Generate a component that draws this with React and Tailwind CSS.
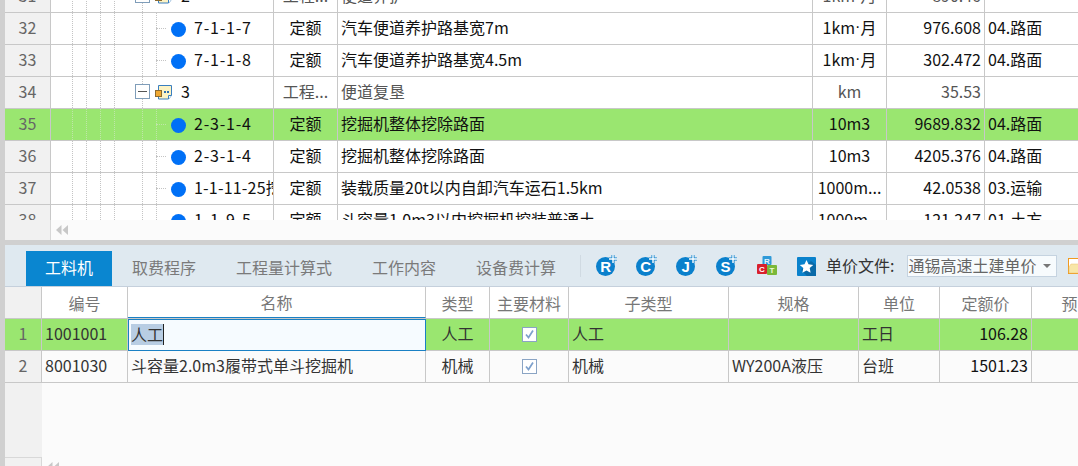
import React from "react";

const font = "font-['Noto_Sans_CJK_SC','Noto_Sans',sans-serif]";
const topCols = "grid grid-cols-[46px_223px_64px_475px_74px_98px_93px]";
const bottomCols = "grid grid-cols-[37px_86px_298px_64px_79px_160px_130px_81px_92px_76px]";
const cell = "border-r border-[#c8c8c8] flex items-center overflow-hidden whitespace-nowrap";
const textCell = `${cell} pb-[3px]`;

const topRows = [
  { no: 31, group: true, code: "2", type: "工程...", name: "便道养护", unit: "1km·月", qty: "890.46", cat: "", dim: true },
  { no: 32, code: "7-1-1-7", type: "定额", name: "汽车便道养护路基宽7m", unit: "1km·月", qty: "976.608", cat: "04.路面" },
  { no: 33, code: "7-1-1-8", type: "定额", name: "汽车便道养护路基宽4.5m", unit: "1km·月", qty: "302.472", cat: "04.路面" },
  { no: 34, group: true, code: "3", type: "工程...", name: "便道复垦", unit: "km", qty: "35.53", cat: "", dim: true },
  { no: 35, code: "2-3-1-4", type: "定额", name: "挖掘机整体挖除路面", unit: "10m3", qty: "9689.832", cat: "04.路面", active: true },
  { no: 36, code: "2-3-1-4", type: "定额", name: "挖掘机整体挖除路面", unit: "10m3", qty: "4205.376", cat: "04.路面" },
  { no: 37, code: "1-1-11-25挖", tight: true, type: "定额", name: "装载质量20t以内自卸汽车运石1.5km", unit: "1000m...", qty: "42.0538", cat: "03.运输" },
  { no: 38, code: "1-1-9-5", type: "定额", name: "斗容量1.0m3以内挖掘机挖装普通土", unit: "1000m...", qty: "121.247", cat: "01.土方" },
];

// the middle dot has to come from a latin font, the CJK one makes it full width
function Unit({ text }) {
  const parts = text.split("·");
  if (parts.length < 2) return text;
  return (
    <>
      {parts[0]}
      <span className="font-['Liberation_Sans',sans-serif]">·</span>
      {parts[1]}
    </>
  );
}

function Guide({ line = true, children, light }) {
  return (
    <div className="relative w-[14px] h-full flex justify-center shrink-0">
      {line && <div className={`h-full border-l border-dotted ${light ? "border-[#bfe6a8]" : "border-[#c4c4c4]"}`} />}
      {children}
    </div>
  );
}

function GroupIcon() {
  return (
    <svg width="17" height="15" viewBox="0 0 17 15" className="shrink-0">
      <path d="M3.5 0.5h13v10l-3 3.5h-10z" fill="#fdf3c4" stroke="#3a7fc0" />
      <path d="M13.5 14v-3.5h3" fill="#fff" stroke="#3a7fc0" />
      <rect x="0.5" y="5.5" width="6" height="6" fill="#f0a830" stroke="#8a6a30" />
      <rect x="9" y="6" width="2" height="2" fill="#2f6fb0" />
      <rect x="12" y="6" width="2" height="2" fill="#2f6fb0" />
    </svg>
  );
}

function TreeCell({ row }) {
  return (
    <div className={`${cell} text-[#111]`}>
      <div className="w-[14px] shrink-0" />
      <Guide light={row.active} />
      <Guide light={row.active} />
      <Guide light={row.active} />
      <Guide light={row.active} />
      <Guide line={false} />
      <Guide light={row.active}>
        {row.group && (
          <div className="absolute left-0 top-[7px] w-[15px] h-[15px] bg-white border border-[#7f9db9] flex items-center justify-center">
            <div className="w-[9px] h-px bg-[#555]" />
          </div>
        )}
      </Guide>
      {row.group ? (
        <div className="flex items-center ml-[6px]">
          <GroupIcon />
          <span className="ml-[9px] pb-[3px]">{row.code}</span>
        </div>
      ) : (
        <div className="flex items-center h-full">
          <Guide light={row.active}>
            <div className={`absolute left-[7px] top-[15px] w-[10px] border-t border-dotted ${row.active ? "border-[#bfe6a8]" : "border-[#c4c4c4]"}`} />
          </Guide>
          <div className="w-[15px] h-[15px] rounded-full bg-[#0070f6] ml-[8px] mt-px shrink-0" />
          <span className={`ml-[8px] pb-[3px] ${row.tight ? "tracking-[0.2px]" : "tracking-[0.8px]"}`}>{row.code}</span>
        </div>
      )}
    </div>
  );
}

function TopRow({ row }) {
  const color = row.dim ? "text-[#555]" : "text-[#111]";
  return (
    <div className={`${topCols} h-[32px] border-b border-[#c8c8c8] ${row.active ? "bg-[#9ae670]" : "bg-white"}`}>
      <div className={`${textCell} justify-center text-[#666] ${row.active ? "" : "bg-[#f1f1f1]"}`}>{row.no}</div>
      <TreeCell row={row} />
      <div className={`${textCell} justify-center ${color}`}>{row.type}</div>
      <div className={`${textCell} pl-[3px] ${color}`}>{row.name}</div>
      <div className={`${textCell} justify-center ${color}`}><Unit text={row.unit} /></div>
      <div className={`${textCell} justify-end pr-[3px] ${color}`}>{row.qty}</div>
      <div className="flex items-center pl-[3px] pb-[3px] text-[#111] whitespace-nowrap overflow-hidden">{row.cat}</div>
    </div>
  );
}

function Arrows() {
  return (
    <svg width="12" height="10" viewBox="0 0 12 10">
      <path d="M5.5 0v10L0 5z" fill="#c8c8c8" />
      <path d="M12 0v10L6.5 5z" fill="#c8c8c8" />
    </svg>
  );
}

function RoundIcon({ letter }) {
  return (
    <div className="relative w-[20px] h-[20px] shrink-0">
      <div className="absolute left-0 bottom-0 w-[19px] h-[19px] rounded-full bg-[#0a80cc] flex items-center justify-center text-white text-[15px] leading-none font-bold font-['Liberation_Sans',sans-serif]">
        {letter}
      </div>
      <svg width="10" height="10" viewBox="0 0 10 10" className="absolute right-[-2px] top-[-2px]">
        <path d="M5 1v8M1 5h8" stroke="#0a80cc" strokeWidth="3" />
        <path d="M5 1v8M1 5h8" stroke="#fff" strokeWidth="1.4" />
      </svg>
    </div>
  );
}

function CubesIcon() {
  return (
    <svg width="20" height="20" viewBox="0 0 20 20" className="shrink-0 font-['Liberation_Sans',sans-serif]">
      <rect x="5.5" y="0" width="9" height="9" rx="1" fill="#2f9ad8" />
      <rect x="0" y="8" width="10" height="10" rx="1" fill="#d8202c" />
      <rect x="10" y="9" width="10" height="10" rx="1" fill="#7ab83a" />
      <text x="10" y="7.5" textAnchor="middle" fontSize="8" fontWeight="700" fill="#e4f4fc">R</text>
      <text x="5" y="16" textAnchor="middle" fontSize="8" fontWeight="700" fill="#fff">C</text>
      <text x="15" y="17" textAnchor="middle" fontSize="8" fontWeight="700" fill="#eef8dc">T</text>
    </svg>
  );
}

function StarIcon() {
  return (
    <svg width="19" height="19" viewBox="0 0 19 19" className="shrink-0">
      <rect width="19" height="19" rx="1" fill="#0a82cc" />
      <path d="M19 19V8L14 4l-10 9 6 6z" fill="#0a6aa8" />
      <path d="M9.5 3l2 4.3 4.7.6-3.5 3.2.9 4.7-4.1-2.3-4.1 2.3.9-4.7-3.5-3.2 4.7-.6z" fill="#fff" />
    </svg>
  );
}

function FolderIcon() {
  return (
    <svg width="16" height="16" viewBox="0 0 16 16" className="shrink-0">
      <rect x="0.5" y="0.5" width="15" height="15" fill="#fff" stroke="#f09a20" />
      <path d="M1 15V9l2-3h12v9z" fill="#f8e6a8" stroke="#e8c070" strokeWidth="0.5" />
    </svg>
  );
}

function Checkbox() {
  return (
    <div className="w-[15px] h-[15px] bg-white border border-[#8aa4c4] flex items-center justify-center">
      <svg width="11" height="11" viewBox="0 0 11 11">
        <path d="M2 5.5l2.5 3L9 1.5" fill="none" stroke="#7da0cc" strokeWidth="1.7" />
      </svg>
    </div>
  );
}

const tabs = ["取费程序", "工程量计算式", "工作内容", "设备费计算"];
const headers = ["编号", "名称", "类型", "主要材料", "子类型", "规格", "单位", "定额价", "预"];
const headerCell = "border-r border-[#c8c8c8] flex items-center justify-center overflow-hidden whitespace-nowrap text-[#777] bg-white";

export default function App() {
  return (
    <div className={`${font} flex h-screen w-[1078px] overflow-hidden text-base bg-[#d0d0d0]`}>
      <div className="w-[5px] shrink-0 bg-[#d0d0d0]" />
      <div className="flex-1 flex flex-col min-w-0">
        <div className="h-[220px] overflow-hidden bg-white">
          <div className="-mt-[19px]">
            {topRows.map((row) => (
              <TopRow key={row.no} row={row} />
            ))}
          </div>
        </div>
        <div className="h-[20px] flex bg-[#fbfbfb]">
          <div className="w-[46px] bg-[#f1f1f1] border-r border-[#d8d8d8]" />
          <div className="pl-[5px] flex items-center">
            <Arrows />
          </div>
        </div>
        <div className="h-[5px] bg-[#d0d0d0]" />

        <div className="h-[42px] bg-[#dfe9f0] border-b border-[#c5d0dc] flex items-end pl-[21px] overflow-hidden">
          <div className="w-[86px] h-[35px] shrink-0 pb-[3px] bg-[#0a86d0] text-white flex items-center justify-center">工料机</div>
          {tabs.map((t) => (
            <div key={t} className="h-[35px] shrink-0 px-5 pb-[3px] flex items-center text-[#7a7a7a] whitespace-nowrap">{t}</div>
          ))}
          <div className="self-center shrink-0 flex items-center ml-[4px] mt-px">
            <div className="w-px h-[22px] bg-[#d0dae2]" />
            <div className="flex items-center gap-[20px] ml-[15px]">
              <RoundIcon letter="R" />
              <RoundIcon letter="C" />
              <RoundIcon letter="J" />
              <RoundIcon letter="S" />
            </div>
            <div className="ml-[21px]"><CubesIcon /></div>
            <div className="ml-[20px]"><StarIcon /></div>
            <span className="ml-[10px] pb-[2px] text-[#333] whitespace-nowrap">单价文件:</span>
            <div className="ml-[12px] w-[150px] h-[22px] shrink-0 bg-[#f7fbfd] border border-[#c5d3e0] flex items-center justify-between pl-[1px] pr-[5px] text-[#666] whitespace-nowrap">
              <span className="pb-[2px]">通锡高速土建单价</span>
              <div className="w-0 h-0 border-x-[4px] border-x-transparent border-t-[4px] border-t-[#777]" />
            </div>
            <div className="ml-[11px]"><FolderIcon /></div>
          </div>
        </div>

        <div className="flex-1 flex flex-col bg-[#fbfbfb] min-h-0">
          <div className={`${bottomCols} h-[32px] border-b border-[#c8c8c8]`}>
            <div className="bg-[#f1f1f1] border-r border-[#c8c8c8]" />
            {headers.map((h) => (
              <div key={h} className={h === "名称" ? `${headerCell} border-b border-b-[#1a80c4]` : headerCell}>{h}</div>
            ))}
          </div>

          <div className={`${bottomCols} h-[32px] border-b border-[#c8c8c8] bg-[#9ae670] text-[#333]`}>
            <div className={`${textCell} justify-center text-[#666]`}>1</div>
            <div className={`${textCell} pl-[3px]`}>1001001</div>
            <div className="border border-[#1a80c4] bg-[#f6fbff] flex items-center pl-[2px] pb-[2px] -mb-px">
              <span className="bg-[#b8cde3] border-r border-[#222] leading-[21px] text-[#333]">人工</span>
            </div>
            <div className={`${textCell} justify-center`}>人工</div>
            <div className={`${cell} justify-center`}><Checkbox /></div>
            <div className={`${textCell} pl-[3px]`}>人工</div>
            <div className={cell} />
            <div className={`${textCell} pl-[3px]`}>工日</div>
            <div className={`${textCell} justify-end pr-[3px] text-[#111]`}>106.28</div>
            <div />
          </div>

          <div className={`${bottomCols} h-[32px] border-b border-[#c8c8c8] text-[#333]`}>
            <div className={`${textCell} justify-center text-[#666] bg-[#f1f1f1]`}>2</div>
            <div className={`${textCell} pl-[3px]`}>8001030</div>
            <div className={`${textCell} pl-[3px]`}>斗容量2.0m3履带式单斗挖掘机</div>
            <div className={`${textCell} justify-center`}>机械</div>
            <div className={`${cell} justify-center`}><Checkbox /></div>
            <div className={`${textCell} pl-[3px]`}>机械</div>
            <div className={`${textCell} pl-[3px]`}>WY200A液压</div>
            <div className={`${textCell} pl-[3px]`}>台班</div>
            <div className={`${textCell} justify-end pr-[3px] text-[#111]`}>1501.23</div>
            <div />
          </div>

          <div className="flex-1 flex">
            <div className="w-[37px] bg-[#f1f1f1]" />
          </div>
          <div className="h-[9px] flex overflow-hidden">
            <div className="w-[37px] bg-[#f1f1f1] border-t border-r border-[#d8d8d8]" />
            <div className="pl-[5px] pt-[5px]"><Arrows /></div>
          </div>
        </div>
      </div>
    </div>
  );
}
